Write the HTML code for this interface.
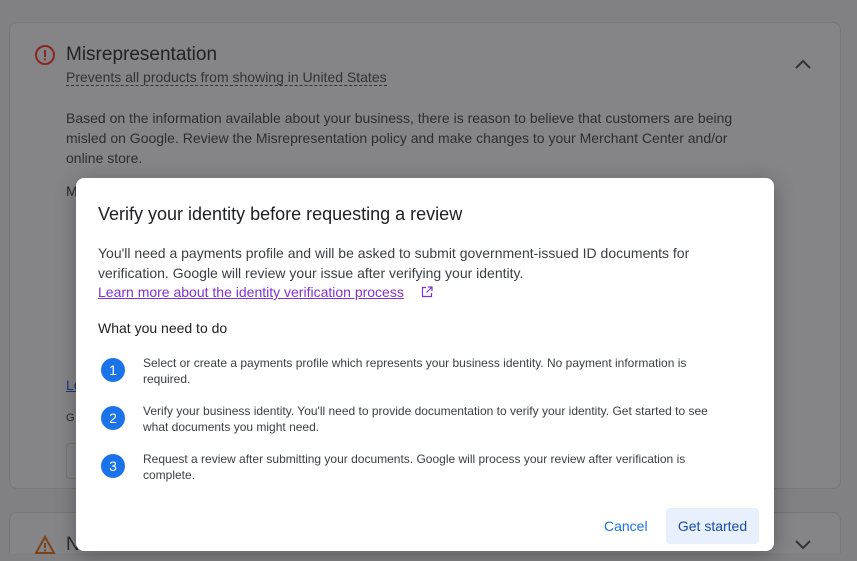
<!DOCTYPE html>
<html style="margin:0;width:857px;height:561px;overflow:hidden;background:#818183"><head><style>
body{margin:0;width:857px;height:561px;overflow:hidden;background:#818183;font-family:"Liberation Sans",sans-serif;position:relative;color:#2a2a2b}
.card{position:absolute;left:9px;width:830px;background:#858587;border:1px solid #77777a;border-radius:8px}
.t{position:absolute;white-space:nowrap}
.dlg{position:absolute;left:76px;top:178px;width:698px;height:373px;background:#fff;border-radius:8px;box-shadow:0 4px 20px rgba(0,0,0,.3)}
.num{position:absolute;left:25px;width:24px;height:24px;border-radius:50%;background:#1a73e8;color:#fff;font-size:14px;text-align:center;line-height:24px}
.st{position:absolute;left:67px;font-size:12px;color:#3c4043;line-height:16px;width:600px}
</style></head><body>
<div class="card" style="top:22px;height:465px"></div>
<div class="card" style="top:512px;height:40px;border-bottom:none;border-radius:8px 8px 0 0"></div>
<svg class="t" style="left:34px;top:44px" width="22" height="22" viewBox="0 0 22 22"><circle cx="11" cy="11" r="9" fill="none" stroke="#8a2725" stroke-width="2"/><rect x="10" y="6" width="2" height="7" fill="#8a2725"/><rect x="10" y="14.5" width="2" height="2" fill="#8a2725"/></svg>
<div class="t" style="left:66px;top:44px;font-size:19px;color:#222">Misrepresentation</div>
<div class="t" style="left:66px;top:69px;font-size:14px;color:#333;border-bottom:1px dashed #333;line-height:16px">Prevents all products from showing in United States</div>
<svg class="t" style="left:792px;top:56px" width="22" height="16"><path d="M4 12 L11 5 L18 12" fill="none" stroke="#333" stroke-width="2"/></svg>
<div class="t" style="left:66px;top:108px;font-size:14px;line-height:20px;color:#2e2e2f">Based on the information available about your business, there is reason to believe that customers are being<br>misled on Google. Review the Misrepresentation policy and make changes to your Merchant Center and/or<br>online store.</div>
<div class="t" style="left:66px;top:183px;font-size:14px">M</div>
<div class="t" style="left:66px;top:377px;font-size:14px;color:#1b3a7a;text-decoration:underline">Le</div>
<div class="t" style="left:66px;top:412px;font-size:11px">G</div>
<div class="t" style="left:66px;top:443px;width:12px;height:34px;border:1px solid #777;border-right:none;border-radius:4px 0 0 4px"></div>
<svg class="t" style="left:34px;top:534px" width="22" height="22"><path d="M11 3 L20 19 L2 19 Z" fill="none" stroke="#7a4218" stroke-width="2"/><rect x="10" y="9" width="2" height="5" fill="#7a4218"/><rect x="10" y="15.5" width="2" height="2" fill="#7a4218"/></svg>
<div class="t" style="left:66px;top:534px;font-size:19px">N</div>
<svg class="t" style="left:792px;top:536px" width="22" height="16"><path d="M4 5 L11 12 L18 5" fill="none" stroke="#333" stroke-width="2"/></svg>
<div class="dlg">
<div class="t" style="left:22px;top:26px;font-size:18px;color:#202124">Verify your identity before requesting a review</div>
<div class="t" style="left:22px;top:65px;font-size:14px;line-height:20px;color:#3c4043">You'll need a payments profile and will be asked to submit government-issued ID documents for<br>verification. Google will review your issue after verifying your identity.</div>
<div class="t" style="left:22px;top:106px;font-size:14px;color:#8430ce;text-decoration:underline">Learn more about the identity verification process</div>
<svg class="t" style="left:345px;top:108px" width="12" height="12" viewBox="0 0 12 12"><path d="M5 1.5H1.5V10.5H10.5V7M7 1H11V5M11 1L5.5 6.5" fill="none" stroke="#8430ce" stroke-width="1.2"/></svg>
<div class="t" style="left:22px;top:142px;font-size:14px;color:#202124">What you need to do</div>
<div class="num" style="top:180px">1</div><div class="st" style="top:177px">Select or create a payments profile which represents your business identity. No payment information is<br>required.</div>
<div class="num" style="top:228px">2</div><div class="st" style="top:225px">Verify your business identity. You'll need to provide documentation to verify your identity. Get started to see<br>what documents you might need.</div>
<div class="num" style="top:276px">3</div><div class="st" style="top:273px">Request a review after submitting your documents. Google will process your review after verification is<br>complete.</div>
<div class="t" style="left:528px;top:340px;font-size:14px;color:#1a73e8">Cancel</div>
<div class="t" style="left:590px;top:330px;width:93px;height:36px;background:#e8f0fe;border-radius:4px;font-size:14px;color:#174ea6;text-align:center;line-height:36px">Get started</div>
</div>
</body></html>
